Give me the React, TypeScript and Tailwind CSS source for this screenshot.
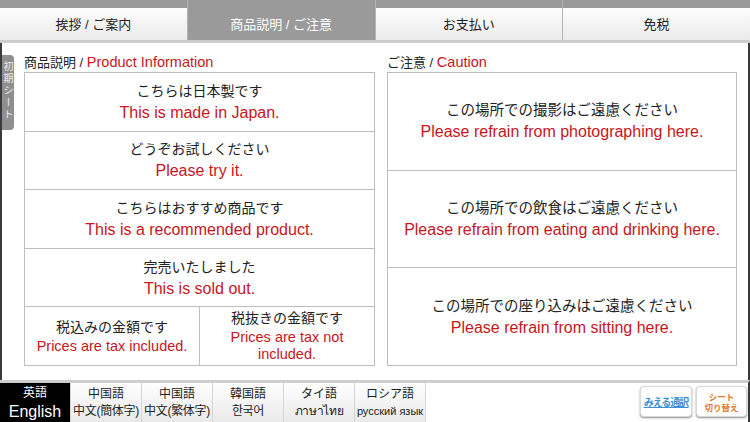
import * as React from 'react';

const tabs = [
  { label: '挨拶 / ご案内', active: false },
  { label: '商品説明 / ご注意', active: true },
  { label: 'お支払い', active: false },
  { label: '免税', active: false },
];

const products = [
  { ja: 'こちらは日本製です', en: 'This is made in Japan.' },
  { ja: 'どうぞお試しください', en: 'Please try it.' },
  { ja: 'こちらはおすすめ商品です', en: 'This is a recommended product.' },
  { ja: '完売いたしました', en: 'This is sold out.' },
];

const cautions = [
  { ja: 'この場所での撮影はご遠慮ください', en: 'Please refrain from photographing here.' },
  { ja: 'この場所での飲食はご遠慮ください', en: 'Please refrain from eating and drinking here.' },
  { ja: 'この場所での座り込みはご遠慮ください', en: 'Please refrain from sitting here.' },
];

const languages = [
  { top: '英語', bottom: 'English', active: true },
  { top: '中国語', bottom: '中文(簡体字)', active: false },
  { top: '中国語', bottom: '中文(繁体字)', active: false },
  { top: '韓国語', bottom: '한국어', active: false },
  { top: 'タイ語', bottom: 'ภาษาไทย', active: false },
  { top: 'ロシア語', bottom: 'русский язык', active: false },
];

export default function App() {
  return (
    <div className="w-[750px] h-[422px] flex flex-col bg-white overflow-hidden font-['Liberation_Sans','Noto_Sans_CJK_JP',sans-serif] text-[#222]">
      {/* Top tabs */}
      <div className="h-[43px] flex bg-[#9a9a9a] border-b-[3px] border-[#cdcdcd]">
        {tabs.map((tab, i) => (
          <div
            key={tab.label}
            className={`flex-1 flex flex-col ${i < tabs.length - 1 ? 'border-r border-[#b4b4b4]' : ''}`}
          >
            {tab.active ? (
              <div className="flex-1 flex items-center justify-center pt-[10px] text-[13px] text-white bg-[#9a9a9a]">
                {tab.label}
              </div>
            ) : (
              <>
                <div className="h-[8px]" />
                <div className="flex-1 flex items-center justify-center pt-[2px] text-[13px] bg-gradient-to-b from-[#fdfdfd] to-[#ebebeb]">
                  {tab.label}
                </div>
              </>
            )}
          </div>
        ))}
      </div>

      {/* Content */}
      <div className="flex-1 flex pt-[12px] pr-[11px] border-l-2 border-r-2 border-[#3a3a3a]">
        <div className="w-[22px] shrink-0">
          <div className="w-[12px] h-[75px] bg-[#8f8f8f] rounded-r-[4px] flex justify-center pt-[6px]">
            <span className="[writing-mode:vertical-rl] text-[10px] leading-[12px] tracking-[2px] text-[#eee] font-['Noto_Sans_CJK_JP',sans-serif]">
              初期シート
            </span>
          </div>
        </div>

        {/* Product info */}
        <div className="w-[351px] flex flex-col">
          <div className="h-[17px] text-[13px] leading-[15px] whitespace-nowrap">
            商品説明 / <span className="text-[14.5px] text-[#c8161d]">Product Information</span>
          </div>
          <div className="h-[294px] border border-[#bdbdbd] flex flex-col">
            {products.map((p) => (
              <div
                key={p.ja}
                className="flex-1 flex flex-col items-center justify-center border-b border-[#bdbdbd] leading-[21px]"
              >
                <div className="text-[14px]">{p.ja}</div>
                <div className="text-[16px] text-[#c8161d]">{p.en}</div>
              </div>
            ))}
            <div className="flex-1 flex">
              <div className="w-[175px] flex flex-col items-center justify-center border-r border-[#bdbdbd] leading-[19px] pt-[2px]">
                <div className="text-[14px]">税込みの金額です</div>
                <div className="text-[14.5px] text-[#c8161d]">Prices are tax included.</div>
              </div>
              <div className="flex-1 flex flex-col items-center justify-center text-center leading-[17px]">
                <div className="text-[14px] mb-[2px]">税抜きの金額です</div>
                <div className="text-[14.5px] text-[#c8161d]">
                  Prices are tax not
                  <br />
                  included.
                </div>
              </div>
            </div>
          </div>
        </div>

        {/* Caution */}
        <div className="w-[350px] ml-[12px] flex flex-col">
          <div className="h-[17px] text-[13px] leading-[15px]">
            ご注意 / <span className="text-[14.5px] text-[#c8161d]">Caution</span>
          </div>
          <div className="h-[294px] border border-[#bdbdbd] flex flex-col">
            {cautions.map((c, i) => (
              <div
                key={c.ja}
                className={`flex-1 flex flex-col items-center justify-center leading-[22px] ${
                  i < cautions.length - 1 ? 'border-b border-[#bdbdbd]' : ''
                }`}
              >
                <div className="text-[14.5px]">{c.ja}</div>
                <div className="text-[16px] text-[#c8161d] whitespace-nowrap">{c.en}</div>
              </div>
            ))}
          </div>
        </div>
      </div>

      {/* Bottom language bar */}
      <div className="h-[42px] flex border-t-[3px] border-[#cdcdcd] border-r-2 border-r-[#3a3a3a]">
        {languages.map((l) => (
          <div
            key={l.top + l.bottom}
            className={`w-[71px] flex flex-col items-center justify-center leading-[17px] border-r border-[#d6d6d6] whitespace-nowrap ${
              l.active ? 'bg-black text-white' : 'bg-gradient-to-b from-[#ffffff] to-[#e9e9e9]'
            }`}
          >
            <span className="text-[12px]">{l.top}</span>
            <span
              className={
                l.active
                  ? 'text-[16px] leading-[19px]'
                  : l.bottom === 'русский язык'
                  ? 'text-[11px]'
                  : 'text-[12px] tracking-[-0.3px]'
              }
            >
              {l.bottom}
            </span>
          </div>
        ))}
        <div className="flex-1 flex items-center justify-end gap-[4px] pr-[1px] pb-[2px]">
          <div className="w-[52px] h-[31px] rounded-[4px] bg-white border border-[#d8d8d8] shadow-[0_1px_2px_rgba(0,0,0,0.45)] flex items-center justify-center">
            <span className="text-[10px] whitespace-nowrap text-[#3a8fd6] underline font-bold tracking-[-1px] font-['Noto_Sans_CJK_JP',sans-serif]">
              みえる通訳
            </span>
          </div>
          <div className="w-[51px] h-[31px] rounded-[4px] bg-white border border-[#d8d8d8] shadow-[0_1px_2px_rgba(0,0,0,0.45)] flex flex-col items-center justify-center gap-[1px] text-[8.5px] font-bold text-[#e07a2a] whitespace-nowrap font-['Noto_Sans_CJK_JP',sans-serif]">
            <span className="leading-[10px]">シート</span>
            <span className="leading-[10px]">切り替え</span>
          </div>
        </div>
      </div>
    </div>
  );
}
